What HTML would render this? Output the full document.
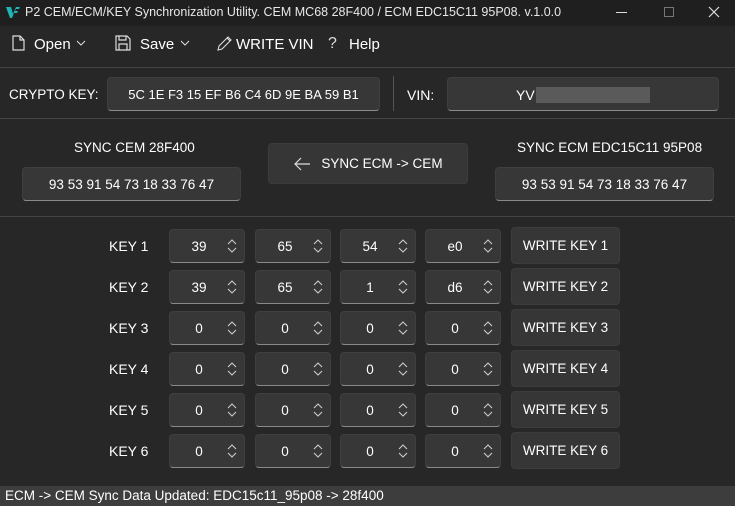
<!DOCTYPE html>
<html><head><meta charset="utf-8"><style>
*{box-sizing:border-box;margin:0;padding:0}
body{width:735px;height:506px;background:#272727;font-family:"Liberation Sans",sans-serif;color:#fff;position:relative;overflow:hidden;font-size:14px}
.a{position:absolute}
.title{left:0;top:0;width:735px;height:26px;background:#1f1f1f}
.title span{position:absolute;left:25px;top:5px;font-size:12.5px;color:#e8e8e8}
.box{position:absolute;background:#373737;border:1px solid #3f3f3f;border-bottom:1px solid #8a8a8a;border-radius:4px;display:flex;align-items:center;justify-content:center;font-size:13.5px}
.btn{position:absolute;background:#363636;border:1px solid #3c3c3c;border-radius:4px;display:flex;align-items:center;justify-content:center;font-size:13.5px}
.hl{position:absolute;left:0;width:735px;height:1px;background:#444}
.lbl{position:absolute;font-size:14px}
.spin{justify-content:flex-start}
.spin b{font-weight:normal;position:absolute;left:0;width:58px;text-align:center}
.spin svg{position:absolute;right:7px;top:9px}
.status{left:0;top:486px;width:735px;height:20px;background:#3d3d3d;font-size:13.5px;padding:2px 5px}
</style></head><body>
<div class="a title">
<svg class="a" style="left:5px;top:6px" width="16" height="13" viewBox="0 0 16 13"><path d="M1 1h5l2 7 3-7h4l-1 2h-3l-1 2h3l-1 2h-3l-2 5h-2z" fill="#1fb5b5"/></svg>
<span>P2 CEM/ECM/KEY Synchronization Utility. CEM MC68 28F400 / ECM EDC15C11 95P08. v.1.0.0</span>
<div class="a" style="left:616px;top:12px;width:11px;height:1px;background:#ddd"></div>
<div class="a" style="left:664px;top:7px;width:10px;height:10px;border:1px solid #777"></div>
<svg class="a" style="left:708px;top:6px" width="12" height="12"><path d="M1 1L11 11M11 1L1 11" stroke="#ddd" stroke-width="1.2"/></svg>
</div>
<svg class="a" style="left:12px;top:35px" width="13" height="16"><path d="M1 1h7l4 4v10H1z M8 1v4h4" fill="none" stroke="#ddd" stroke-width="1.2"/></svg>
<div class="lbl" style="left:34px;top:36px;font-size:15px">Open</div>
<svg class="a" style="left:76px;top:40px" width="10" height="6"><path d="M1 1l4 4 4-4" fill="none" stroke="#ddd"/></svg>
<svg class="a" style="left:115px;top:35px" width="16" height="16"><path d="M1 1h11l3 3v11H1z M4 1v4h7V1 M4 15V9h8v6" fill="none" stroke="#ddd" stroke-width="1.2"/></svg>
<div class="lbl" style="left:140px;top:36px;font-size:15px">Save</div>
<svg class="a" style="left:180px;top:40px" width="10" height="6"><path d="M1 1l4 4 4-4" fill="none" stroke="#ddd"/></svg>
<svg class="a" style="left:217px;top:35px" width="16" height="16"><path d="M1 15l1-4 9-9 3 3-9 9z M10 3l3 3" fill="none" stroke="#ddd" stroke-width="1.1"/></svg>
<div class="lbl" style="left:236px;top:36px;font-size:15px">WRITE VIN</div>
<div class="lbl" style="left:328px;top:35px;font-size:16px;color:#ddd">?</div>
<div class="lbl" style="left:349px;top:36px;font-size:15px">Help</div>
<div class="hl" style="top:67px"></div>
<div class="lbl" style="left:9px;top:87px;font-size:13.5px">CRYPTO KEY:</div>
<div class="box" style="left:107px;top:77px;width:273px;height:34px;font-size:13px">5C 1E F3 15 EF B6 C4 6D 9E BA 59 B1</div>
<div class="a" style="left:393px;top:76px;width:1px;height:35px;background:#555"></div>
<div class="lbl" style="left:407px;top:87px">VIN:</div>
<div class="box" style="left:447px;top:77px;width:272px;height:34px"></div>
<div class="lbl" style="left:516px;top:87px">YV</div>
<div class="a" style="left:536px;top:87px;width:114px;height:16px;background:#5a5a5a"></div>
<div class="hl" style="top:118px"></div>
<div class="lbl" style="left:74px;top:140px;font-size:13.5px">SYNC CEM 28F400</div>
<div class="box" style="left:22px;top:167px;width:219px;height:34px">93 53 91 54 73 18 33 76 47</div>
<div class="btn" style="left:268px;top:143px;width:200px;height:41px"><svg width="18" height="14" style="margin-right:10px"><path d="M17 7H2M8 1L2 7l6 6" fill="none" stroke="#ddd" stroke-width="1.2"/></svg>SYNC ECM -&gt; CEM</div>
<div class="lbl" style="left:517px;top:140px;font-size:13.5px">SYNC ECM EDC15C11 95P08</div>
<div class="box" style="left:495px;top:167px;width:219px;height:34px">93 53 91 54 73 18 33 76 47</div>
<div class="hl" style="top:216px"></div>
<div id="k"></div>
<script>
var v=[["39","65","54","e0"],["39","65","1","d6"],["0","0","0","0"],["0","0","0","0"],["0","0","0","0"],["0","0","0","0"]];
var xs=[169,255,340,425],h="";
for(var i=0;i<6;i++){var y=229+i*41;
h+='<div class="lbl" style="left:109px;top:'+(y+9)+'px">KEY '+(i+1)+'</div>';
for(var j=0;j<4;j++)h+='<div class="box spin" style="left:'+xs[j]+'px;top:'+y+'px;width:76px;height:34px"><b>'+v[i][j]+'</b><svg width="10" height="14"><path d="M1 5l4-4 4 4M1 9l4 4 4-4" fill="none" stroke="#ccc" stroke-width="1.1"/></svg></div>';
h+='<div class="btn" style="left:511px;top:'+(y-2)+'px;width:109px;height:37px">WRITE KEY '+(i+1)+'</div>';}
document.getElementById('k').innerHTML=h;
</script>
<div class="a status">ECM -&gt; CEM Sync Data Updated: EDC15c11_95p08 -&gt; 28f400</div>
</body></html>
